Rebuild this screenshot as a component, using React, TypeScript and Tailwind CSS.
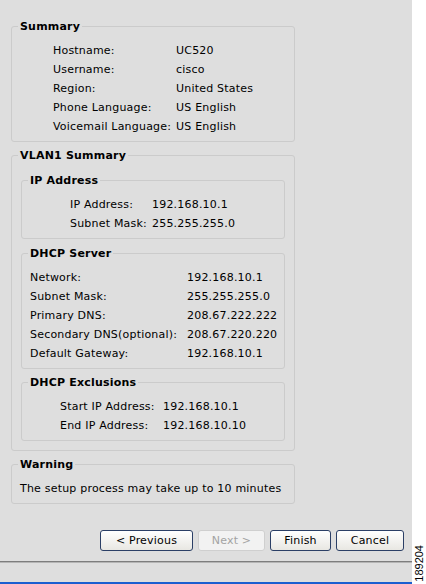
import React from 'react';

type Row = [string, string];

const summary: Row[] = [
  ['Hostname:', 'UC520'],
  ['Username:', 'cisco'],
  ['Region:', 'United States'],
  ['Phone Language:', 'US English'],
  ['Voicemail Language:', 'US English'],
];

const ipAddress: Row[] = [
  ['IP Address:', '192.168.10.1'],
  ['Subnet Mask:', '255.255.255.0'],
];

const dhcpServer: Row[] = [
  ['Network:', '192.168.10.1'],
  ['Subnet Mask:', '255.255.255.0'],
  ['Primary DNS:', '208.67.222.222'],
  ['Secondary DNS(optional):', '208.67.220.220'],
  ['Default Gateway:', '192.168.10.1'],
];

const exclusions: Row[] = [
  ['Start IP Address:', '192.168.10.1'],
  ['End IP Address:', '192.168.10.10'],
];

function Box({ title, className, children }: { title: string; className?: string; children: React.ReactNode }) {
  return (
    <fieldset className={`border border-[#cbcbcb] rounded-[3px] pl-[6px] pr-[6px] ${className ?? ''}`}>
      <legend className="px-[2px] font-bold leading-[13px]">{title}</legend>
      {children}
    </fieldset>
  );
}

function Rows({ rows, left, labelWidth }: { rows: Row[]; left: string; labelWidth: string }) {
  return (
    <div className={`pt-[9px] pb-[4px] ${left}`}>
      {rows.map(([k, v]) => (
        <div key={k} className="flex h-[19px] items-center whitespace-nowrap">
          <span className={labelWidth}>{k}</span>
          <span>{v}</span>
        </div>
      ))}
    </div>
  );
}

function Btn({ label, disabled, w }: { label: string; disabled?: boolean; w: string }) {
  return (
    <button
      disabled={disabled}
      className={`${w} h-[21px] rounded-[3px] border text-[11px] leading-none ${
        disabled
          ? 'border-[#cfcfcf] bg-[#f2f2f2] text-[#a3a3a3]'
          : 'border-[#2b3f66] bg-gradient-to-b from-white to-[#e8e7e2] text-black'
      }`}
    >
      {label}
    </button>
  );
}

export default function App() {
  return (
    <div className="flex h-[584px] w-[426px] overflow-hidden bg-white text-[11px] text-black [font-family:'DejaVu_Sans',Verdana,sans-serif]">
      <div className="flex w-[412px] flex-col bg-[#dedede] tracking-[0.2px]">
        <div className="pl-[11px] pt-[20px]">
          <Box title="Summary" className="w-[284px]">
            <Rows rows={summary} left="pl-[35px]" labelWidth="w-[123px]" />
          </Box>

          <Box title="VLAN1 Summary" className="mt-[7px] w-[284px] pb-[9px]">
            <div className="pt-[12px] pl-[3px]">
              <Box title="IP Address" className="w-[264px]">
                <Rows rows={ipAddress} left="pl-[42px]" labelWidth="w-[82px]" />
              </Box>
              <Box title="DHCP Server" className="mt-2 w-[264px]">
                <Rows rows={dhcpServer} left="pl-[2px]" labelWidth="w-[157px]" />
              </Box>
              <Box title="DHCP Exclusions" className="mt-[7px] w-[264px]">
                <Rows rows={exclusions} left="pl-[32px]" labelWidth="w-[103px]" />
              </Box>
            </div>
          </Box>

          <Box title="Warning" className="mt-[7px] w-[284px]">
            <div className="pt-[9px] pb-[4px] pl-[2px]">
              <div className="flex h-[19px] items-center">The setup process may take up to 10 minutes</div>
            </div>
          </Box>
        </div>

        <div className="mt-auto flex justify-end gap-[5px] pr-[8px]">
          <Btn label="< Previous" w="w-[93px]" />
          <Btn label="Next >" w="w-[67px]" disabled />
          <Btn label="Finish" w="w-[61px]" />
          <Btn label="Cancel" w="w-[68px]" />
        </div>
        <div className="mt-[10px] h-[2px] border-t border-[#7d7d7d] bg-[#b5b5b5]" />
        <div className="h-[19px]" />
        <div className="h-[2px] bg-[#1b5fd0]" />
      </div>
      <div className="flex w-[14px] flex-col items-center justify-end pb-[2px]">
        <span className="rotate-180 text-[11px] leading-[12px] [writing-mode:vertical-rl] [font-family:'Liberation_Sans',Arial,sans-serif]">
          189204
        </span>
      </div>
    </div>
  );
}
